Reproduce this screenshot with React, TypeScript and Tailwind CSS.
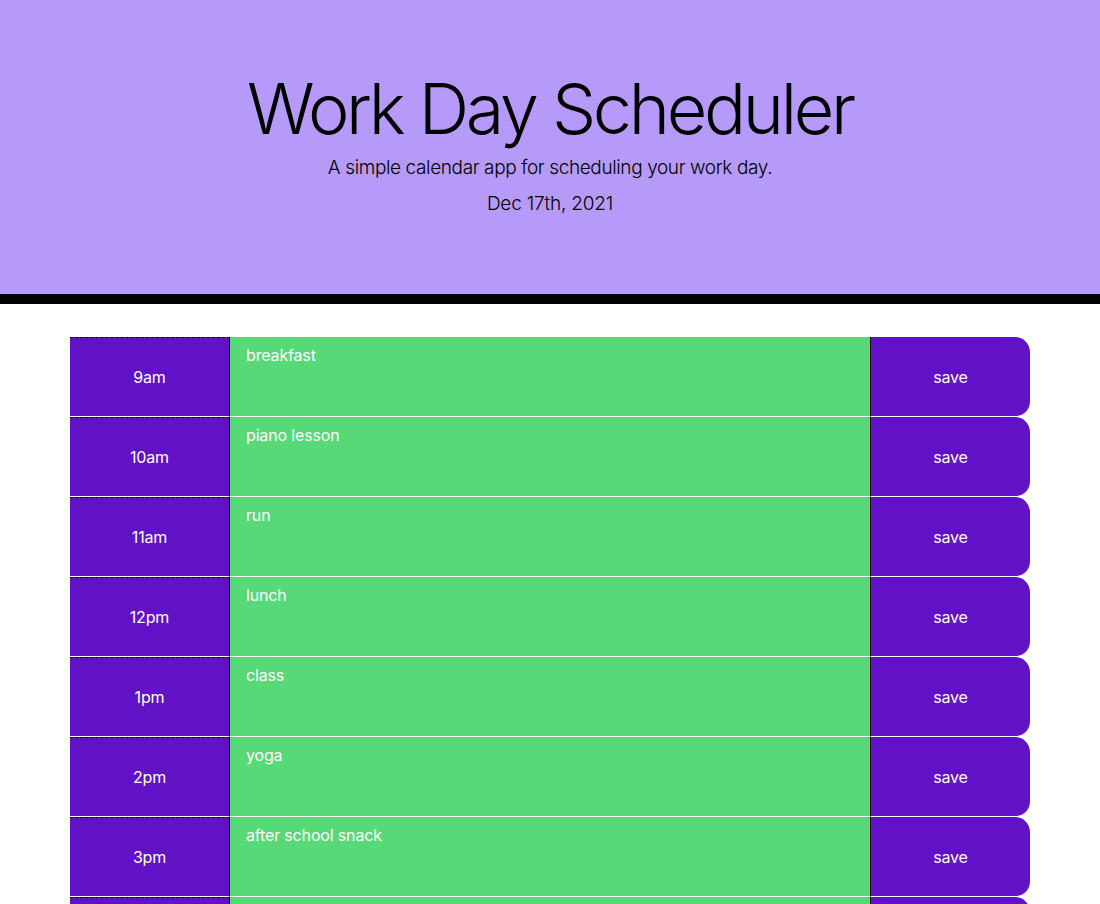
const HOURS = [
  { label: '9am', text: 'breakfast' },
  { label: '10am', text: 'piano lesson' },
  { label: '11am', text: 'run' },
  { label: '12pm', text: 'lunch' },
  { label: '1pm', text: 'class' },
  { label: '2pm', text: 'yoga' },
  { label: '3pm', text: 'after school snack' },
  { label: '4pm', text: '' },
  { label: '5pm', text: '' },
]

function HourRow({ label, text }: { label: string; text: string }) {
  return (
    <div className="flex h-20">
      <div className="flex w-[160px] items-center justify-center border-t border-r border-b border-t-black border-r-black border-b-white bg-[#6112c6] tracking-[-0.01em] text-white [border-top-style:dashed]">
        {label}
      </div>
      <textarea
        defaultValue={text}
        className="flex-1 resize-none border-b border-white bg-[#57d977] px-4 pt-[6px] tracking-[-0.01em] text-white outline-none"
      />
      <button className="w-[160px] rounded-r-[15px] border-l border-b border-l-black border-b-white bg-[#6112c6] tracking-[-0.01em] text-white">
        save
      </button>
    </div>
  )
}

export default function App() {
  return (
    <div className="min-h-screen bg-white font-['Inter','Liberation_Sans',sans-serif] text-black">
      <header className="h-[304px] border-b-[10px] border-black bg-[#b59afa] pt-[67px] text-center">
        <h1 className="text-[70px] leading-[1.2] font-light tracking-[-0.047em]">Work Day Scheduler</h1>
        <p className="mt-[2px] text-[19px] leading-[30px] font-light tracking-[-0.02em]">
          A simple calendar app for scheduling your work day.
        </p>
        <p className="mt-[6px] text-[19px] leading-[30px] font-light tracking-[-0.01em]">Dec 17th, 2021</p>
      </header>
      <main className="mx-auto w-[960px] pt-[33px]">
        {HOURS.map((h) => (
          <HourRow key={h.label} label={h.label} text={h.text} />
        ))}
      </main>
    </div>
  )
}
